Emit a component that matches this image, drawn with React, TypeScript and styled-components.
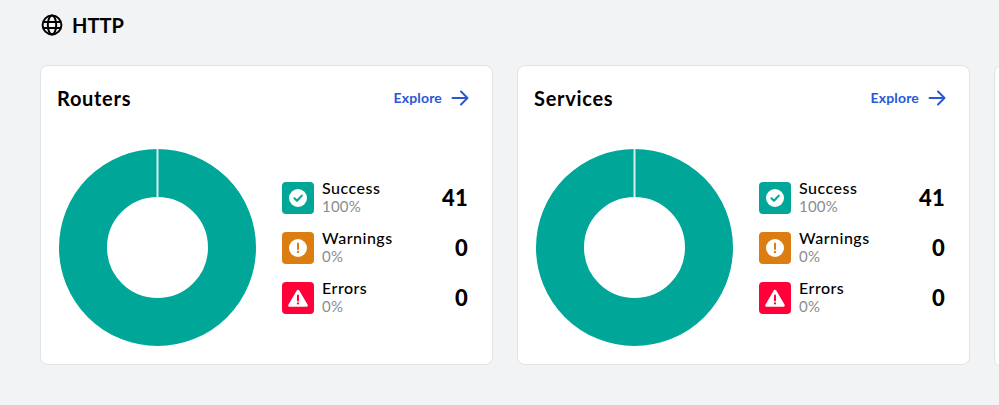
import React from 'react'
import styled, { createGlobalStyle } from 'styled-components'

const GlobalStyle = createGlobalStyle`
  html, body {
    margin: 0;
    height: 100%;
    overflow: hidden;
    background: #f2f3f5;
    font-family: 'Lato', 'Noto Sans', sans-serif;
  }
`

const Page = styled.main`
  padding: 13px 0 0 40px;
  width: 999px;
  box-sizing: border-box;
  overflow: hidden;
`

const SectionHeader = styled.header`
  display: flex;
  align-items: center;
  gap: 9px;
  height: 24px;
  margin: 0 0 28px 1px;
  color: #000;
`

const SectionTitle = styled.h2`
  margin: 0;
  font-size: 20px;
  font-weight: 700;
  line-height: 24px;
`

const CardRow = styled.div`
  display: flex;
  gap: 24px;
`

const Card = styled.section`
  flex: 0 0 453px;
  height: 300px;
  box-sizing: border-box;
  padding: 16px;
  background: #fff;
  border: 1px solid #e2e3e5;
  border-radius: 8px;
`

const CardHeader = styled.div`
  display: flex;
  align-items: center;
  justify-content: space-between;
  height: 32px;
  padding-right: 7px;
`

const CardTitle = styled.h3`
  margin: 0;
  font-size: 20px;
  font-weight: 700;
  letter-spacing: 0.7px;
  color: #000;
`

const ExploreLink = styled.a`
  display: flex;
  align-items: center;
  gap: 9px;
  color: #2a57d6;
  font-size: 14px;
  font-weight: 700;
  letter-spacing: 0.15px;
  line-height: 14px;
`

const CardBody = styled.div`
  display: flex;
  align-items: center;
  margin-top: 34px;
`

const Donut = styled.svg`
  display: block;
  flex: none;
  margin-right: 25px;
`

const Legend = styled.ul`
  display: flex;
  flex-direction: column;
  gap: 18px;
  width: 185px;
  margin: 0;
  padding: 0;
  list-style: none;
`

const LegendRow = styled.li`
  display: flex;
  align-items: center;
  height: 32px;
`

const StatusBox = styled.div<{ $color: string }>`
  display: flex;
  align-items: center;
  justify-content: center;
  flex: none;
  width: 32px;
  height: 32px;
  margin-right: 8px;
  border-radius: 4px;
  background: ${(p) => p.$color};
`

const LegendText = styled.div`
  flex: 1;
  margin-top: -3px;
`

const LegendLabel = styled.div`
  font-size: 16px;
  line-height: 18px;
  font-weight: 500;
  letter-spacing: 0.5px;
  color: #000;
`

const LegendPercent = styled.div`
  font-size: 15px;
  line-height: 18px;
  letter-spacing: 0.2px;
  color: #8a8d91;
`

const LegendCount = styled.div`
  font-size: 22px;
  font-weight: 900;
  margin: -2px -1px 0 0;
  letter-spacing: 0.3px;
  color: #000;
`

const PartialCard = styled.section`
  flex: 0 0 453px;
  height: 300px;
  background: #fff;
  border: 1px solid #e2e3e5;
  border-radius: 8px;
`

const GlobeIcon = () => (
  <svg width="22" height="22" viewBox="0 0 22 22" fill="none" stroke="#000" strokeWidth="2">
    <circle cx="11" cy="11" r="9.4" />
    <ellipse cx="11" cy="11" rx="4.2" ry="9.4" />
    <path d="M2 8h18M2 14h18" />
  </svg>
)

const ArrowIcon = () => (
  <svg width="18" height="16" viewBox="0 0 18 16" fill="none" stroke="#2a57d6" strokeWidth="2" strokeLinecap="round" strokeLinejoin="round">
    <path d="M1.5 8h15M10 1.5 16.5 8 10 14.5" />
  </svg>
)

const CheckIcon = () => (
  <svg width="20" height="20" viewBox="0 0 20 20">
    <circle cx="10" cy="10" r="9" fill="#fff" />
    <path d="M6.4 10.2 9 12.8l4.8-5.2" fill="none" stroke="#00a697" strokeWidth="2" strokeLinecap="round" strokeLinejoin="round" />
  </svg>
)

const WarnIcon = () => (
  <svg width="20" height="20" viewBox="0 0 20 20">
    <circle cx="10" cy="10" r="9" fill="#fff" />
    <path d="M10 5.6v5.4" stroke="#db7d11" strokeWidth="2" strokeLinecap="round" />
    <circle cx="10" cy="14" r="1.2" fill="#db7d11" />
  </svg>
)

const ErrorIcon = () => (
  <svg width="22" height="20" viewBox="0 0 22 20">
    <path d="M11 3 19.5 17.5H2.5Z" fill="#fff" stroke="#fff" strokeWidth="2.6" strokeLinejoin="round" />
    <path d="M11 7.5v5" stroke="#ff0039" strokeWidth="2" strokeLinecap="round" />
    <circle cx="11" cy="15.4" r="1.1" fill="#ff0039" />
  </svg>
)

const DonutChart = () => (
  <Donut width="200" height="200" viewBox="0 0 200 200">
    <circle cx="100.5" cy="99.5" r="74.5" fill="none" stroke="#00a697" strokeWidth="48" />
    <path d="M100.5 1v48" stroke="#d6efec" strokeWidth="2" />
  </Donut>
)

const rows = [
  { label: 'Success', percent: '100%', count: 41, color: '#00a697', icon: <CheckIcon /> },
  { label: 'Warnings', percent: '0%', count: 0, color: '#db7d11', icon: <WarnIcon /> },
  { label: 'Errors', percent: '0%', count: 0, color: '#ff0039', icon: <ErrorIcon /> },
]

const StatCard = ({ title }: { title: string }) => (
  <Card>
    <CardHeader>
      <CardTitle>{title}</CardTitle>
      <ExploreLink>
        Explore
        <ArrowIcon />
      </ExploreLink>
    </CardHeader>
    <CardBody>
      <DonutChart />
      <Legend>
        {rows.map((row) => (
          <LegendRow key={row.label}>
            <StatusBox $color={row.color}>{row.icon}</StatusBox>
            <LegendText>
              <LegendLabel>{row.label}</LegendLabel>
              <LegendPercent>{row.percent}</LegendPercent>
            </LegendText>
            <LegendCount>{row.count}</LegendCount>
          </LegendRow>
        ))}
      </Legend>
    </CardBody>
  </Card>
)

export default function App() {
  return (
    <>
      <GlobalStyle />
      <Page>
        <SectionHeader>
          <GlobeIcon />
          <SectionTitle>HTTP</SectionTitle>
        </SectionHeader>
        <CardRow>
          <StatCard title="Routers" />
          <StatCard title="Services" />
          <PartialCard />
        </CardRow>
      </Page>
    </>
  )
}
